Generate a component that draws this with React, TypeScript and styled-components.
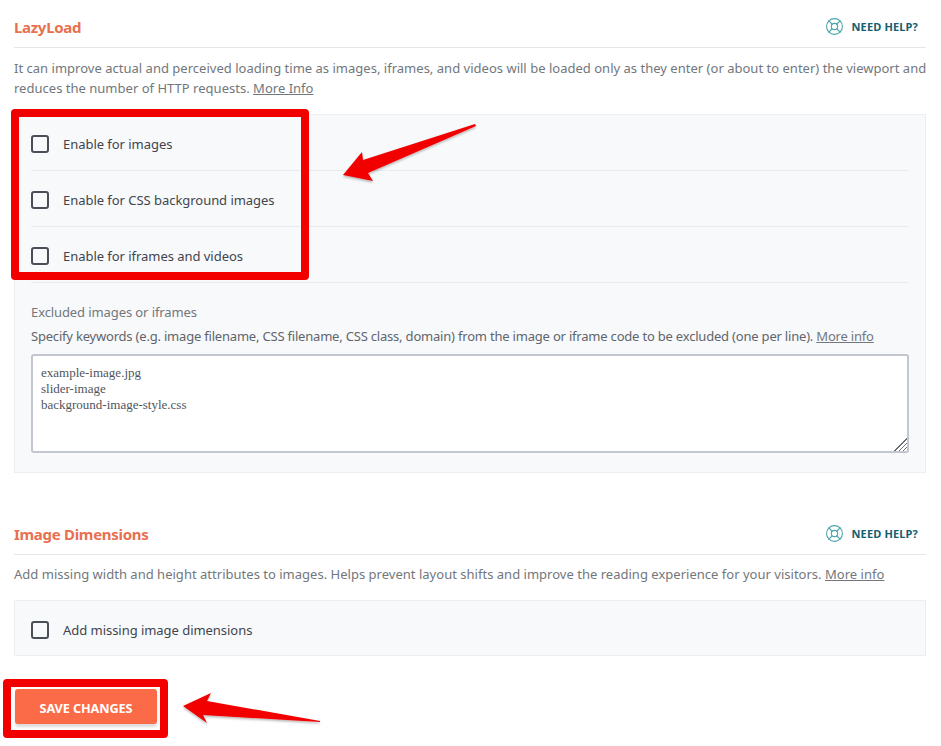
import styled, { createGlobalStyle } from "styled-components";
import { LifeBuoy } from "lucide-react";

const GlobalStyle = createGlobalStyle`
  html, body {
    margin: 0;
    padding: 0;
    background: #fff;
  }
  * {
    box-sizing: border-box;
  }
`;

const Page = styled.div`
  position: relative;
  width: 941px;
  height: 746px;
  padding: 0 15px 0 14px;
  overflow: hidden;
  font-family: "Noto Sans", "Open Sans", sans-serif;
  color: #72777c;
`;

const SectionHeader = styled.div<{ $top: number }>`
  display: flex;
  align-items: center;
  justify-content: space-between;
  height: 38px;
  padding-bottom: 4px;
  margin-top: ${({ $top }) => $top}px;
  border-bottom: 1px solid #e4e6ea;
`;

const Title = styled.h2`
  margin: 0;
  font-size: 15px;
  font-weight: 700;
  letter-spacing: -0.3px;
  color: #e8704f;
`;

const HelpLink = styled.a`
  display: flex;
  align-items: center;
  gap: 8px;
  padding-right: 8px;
  font-size: 11px;
  font-weight: 700;
  letter-spacing: 0.15px;
  color: #14606f;
  svg {
    color: #4ea6ac;
  }
`;

const Description = styled.p<{ $tight?: boolean }>`
  margin: ${({ $tight }) => ($tight ? "9px" : "10px")} -4px 16px 0;
  font-size: 13px;
  line-height: 20px;
  letter-spacing: 0.015px;
  color: #72777c;
`;

const MoreLink = styled.a`
  color: #72777c;
  text-decoration: underline;
`;

const Panel = styled.div`
  padding: 0 16px;
  background: #f8f9fb;
  border: 1px solid #edeef2;
`;

const CheckRow = styled.label`
  display: flex;
  align-items: center;
  gap: 14px;
  height: 56px;
  padding-top: 2px;
  font-size: 13px;
  letter-spacing: -0.04px;
  color: #40454d;
  border-bottom: 1px solid #e9ebef;
  &:last-child {
    height: 54px;
    padding-top: 4px;
    border-bottom: none;
  }
`;

const CheckBox = styled.span`
  flex: none;
  width: 18px;
  height: 18px;
  background: transparent;
  border: 2px solid #4a4f57;
  border-radius: 3px;
`;

const Field = styled.div`
  padding: 19px 0 19px;
`;

const FieldLabel = styled.div`
  font-size: 13px;
  line-height: 20px;
  letter-spacing: -0.1px;
  color: #72777c;
`;

const FieldHint = styled.div`
  margin-top: 4px;
  font-size: 13px;
  line-height: 20px;
  letter-spacing: -0.2px;
  color: #60656c;
`;

const KeywordArea = styled.textarea`
  display: block;
  width: 100%;
  height: 99px;
  margin-top: 8px;
  padding: 9px 8px;
  font-family: "Liberation Serif", serif;
  font-size: 13px;
  line-height: 16px;
  color: #50555c;
  background: #fff;
  border: 2px solid #c2c6ce;
  border-radius: 3px;
  outline: none;
  &::-webkit-resizer {
    background:
      linear-gradient(135deg, #fff 50%, transparent 50%),
      repeating-linear-gradient(135deg, #6b6f76 0 1px, #fff 1px 3px);
  }
`;

const SaveButton = styled.button`
  display: block;
  width: 142px;
  height: 35px;
  margin: 33px 0 0 1px;
  padding: 3px 0 0;
  font-family: inherit;
  font-size: 12.7px;
  font-weight: 700;
  letter-spacing: -0.1px;
  color: #fff;
  background: #fb6b47;
  border: none;
  border-radius: 3px;
  box-shadow: 0 3px 3px rgba(0, 0, 0, 0.14);
`;

const RedFrame = styled.div<{ $x: number; $y: number; $w: number; $h: number }>`
  position: absolute;
  left: ${({ $x }) => $x}px;
  top: ${({ $y }) => $y}px;
  width: ${({ $w }) => $w}px;
  height: ${({ $h }) => $h}px;
  border: 8px solid #f20000;
  border-radius: 4px;
  pointer-events: none;
`;

const ArrowLayer = styled.svg`
  position: absolute;
  left: 0;
  top: 0;
  pointer-events: none;
`;

const Help = () => (
  <HelpLink>
    <LifeBuoy size={19} strokeWidth={1.4} />
    NEED HELP?
  </HelpLink>
);

export default function App() {
  return (
    <Page>
      <GlobalStyle />

      <SectionHeader $top={10}>
        <Title>LazyLoad</Title>
        <Help />
      </SectionHeader>
      <Description>
        It can improve actual and perceived loading time as images, iframes, and videos will be loaded only as they enter (or about to enter) the viewport and reduces the number of HTTP requests. <MoreLink>More Info</MoreLink>
      </Description>
      <Panel>
        <CheckRow><CheckBox />Enable for images</CheckRow>
        <CheckRow><CheckBox />Enable for CSS background images</CheckRow>
        <CheckRow><CheckBox />Enable for iframes and videos</CheckRow>
        <Field>
          <FieldLabel>Excluded images or iframes</FieldLabel>
          <FieldHint>
            Specify keywords (e.g. image filename, CSS filename, CSS class, domain) from the image or iframe code to be excluded (one per line). <MoreLink>More info</MoreLink>
          </FieldHint>
          <KeywordArea
            readOnly
            defaultValue={"example-image.jpg\nslider-image\nbackground-image-style.css"}
          />
        </Field>
      </Panel>

      <SectionHeader $top={44}>
        <Title>Image Dimensions</Title>
        <Help />
      </SectionHeader>
      <Description $tight>
        Add missing width and height attributes to images. Helps prevent layout shifts and improve the reading experience for your visitors. <MoreLink>More info</MoreLink>
      </Description>
      <Panel>
        <CheckRow><CheckBox />Add missing image dimensions</CheckRow>
      </Panel>

      <SaveButton>SAVE CHANGES</SaveButton>

      <RedFrame $x={11} $y={109} $w={298} $h={171} />
      <RedFrame $x={3} $y={679} $w={165} $h={59} />
      <ArrowLayer width={941} height={746} viewBox="0 0 941 746">
        <defs>
          <filter id="arrowShadow" x="-10%" y="-10%" width="120%" height="130%">
            <feDropShadow dx="0" dy="1.5" stdDeviation="1" floodColor="#000" floodOpacity="0.3" />
          </filter>
        </defs>
        <polygon
          points="343,175 362,152 363,160 475,124 476,126 368,173 373,181"
          fill="#f20000"
          filter="url(#arrowShadow)"
        />
        <polygon
          points="183,706 211,693 207,701 320,721 320,722 203,715 207,723"
          fill="#f20000"
          filter="url(#arrowShadow)"
        />
      </ArrowLayer>
    </Page>
  );
}
